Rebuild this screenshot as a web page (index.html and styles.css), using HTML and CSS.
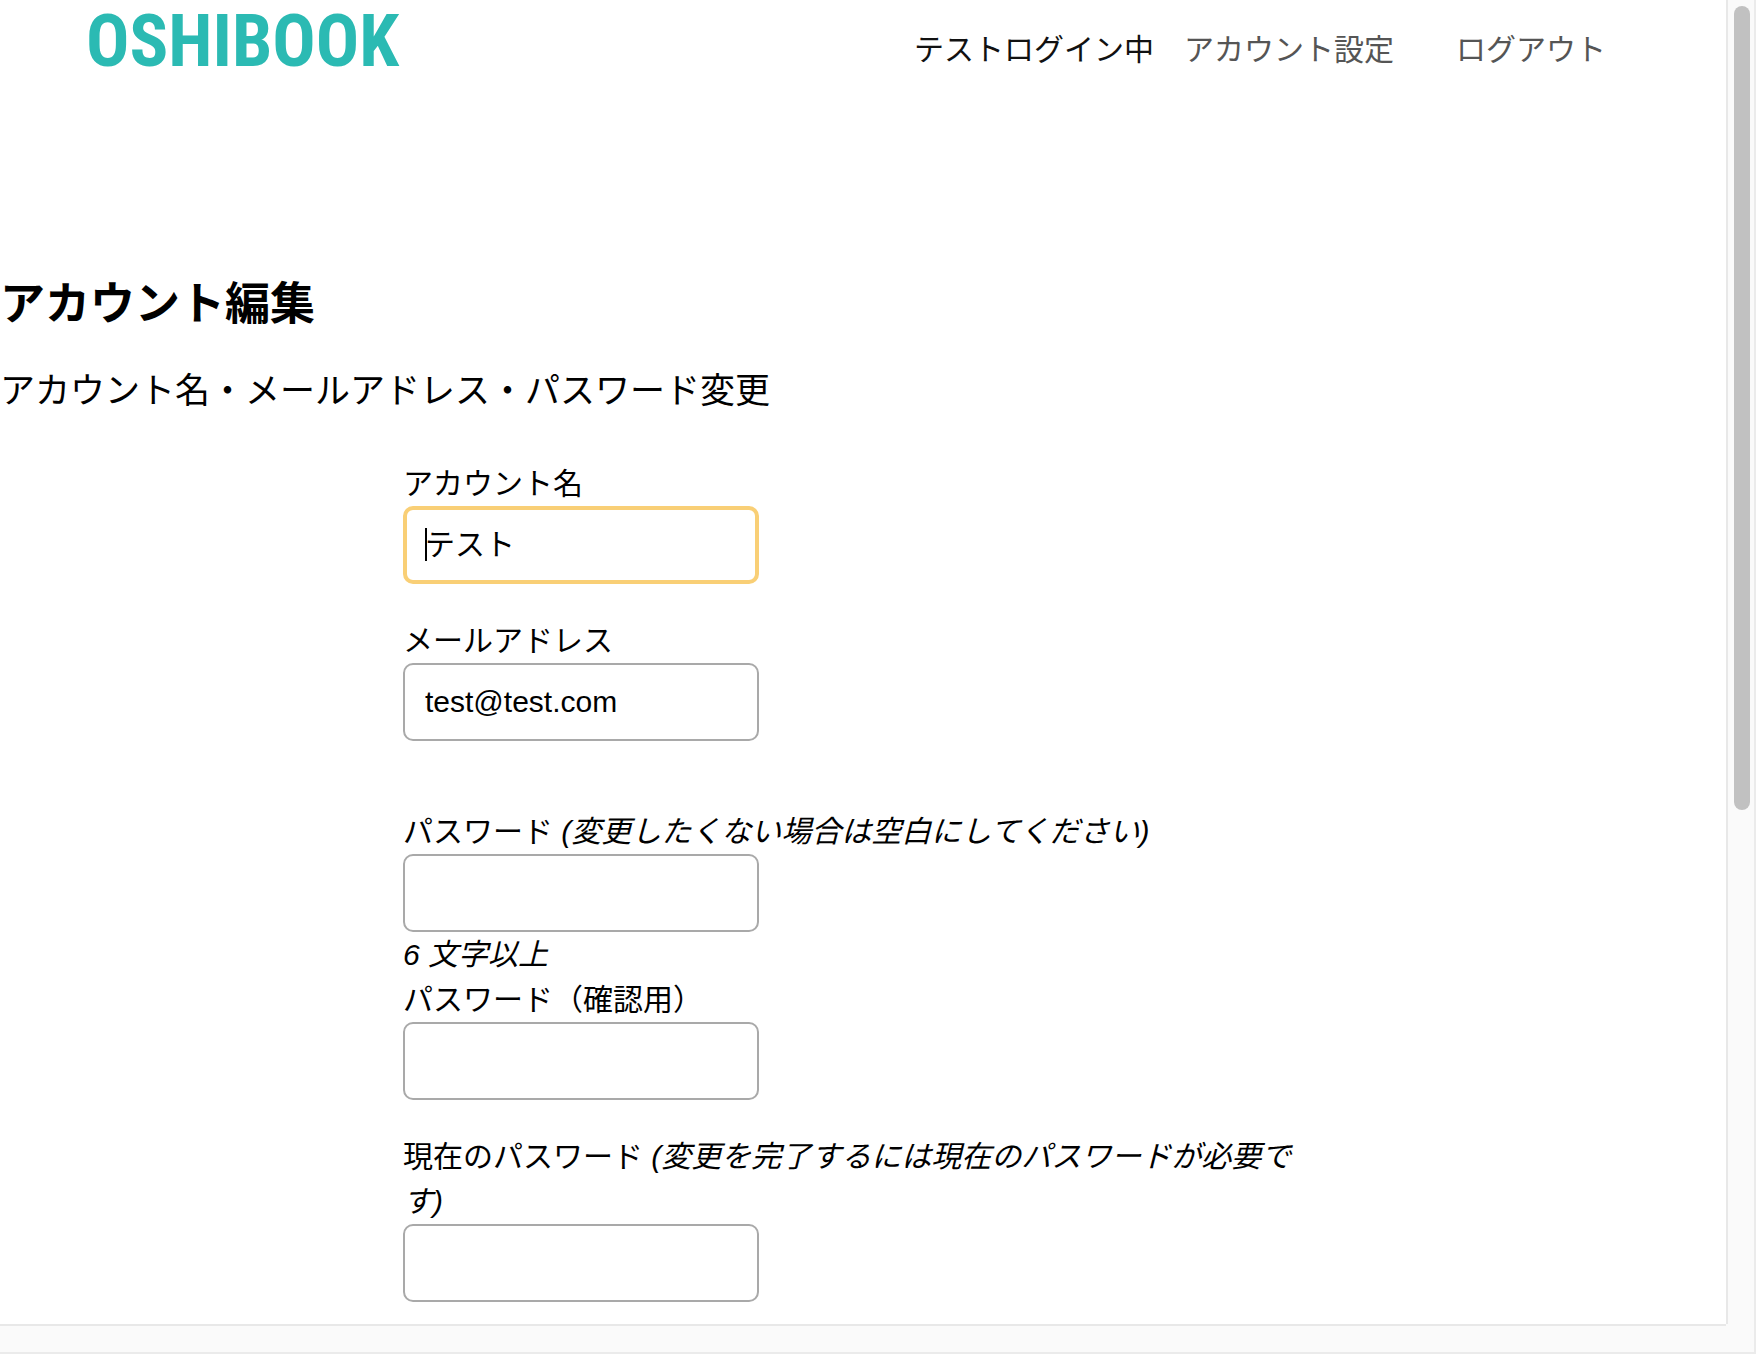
FILE: index.html
```html
<!DOCTYPE html>
<html lang="ja">
<head>
<meta charset="utf-8">
<title>OSHIBOOK</title>
<link rel="stylesheet" href="styles.css">
</head>
<body>
<div class="window">
  <div class="page">
    <header class="header">
      <a class="logo" href="#">OSHIBOOK</a>
      <nav class="nav">
        <span class="nav-user">テストログイン中</span>
        <a class="nav-link" href="#">アカウント設定</a>
        <a class="nav-link nav-logout" href="#">ログアウト</a>
      </nav>
    </header>
    <main>
      <h2 class="title">アカウント編集</h2>
      <h3 class="subtitle">アカウント名・メールアドレス・パスワード変更</h3>
      <form class="form">
        <div class="field">
          <label for="name">アカウント名</label>
          <div class="control">
            <input class="input input-active" id="name" type="text" value="テスト">
            <span class="caret"></span>
          </div>
        </div>
        <div class="field field-last">
          <label for="email">メールアドレス</label>
          <input class="input" id="email" type="email" value="test@test.com">
        </div>
        <div class="field">
          <label for="password">パスワード <em>(変更したくない場合は空白にしてください)</em></label>
          <input class="input" id="password" type="password">
          <em>6 文字以上</em>
          <label for="confirm">パスワード（確認用）</label>
          <input class="input" id="confirm" type="password">
        </div>
        <div class="field">
          <label for="current">現在のパスワード <em>(変更を完了するには現在のパスワードが必要です)</em></label>
          <input class="input" id="current" type="password">
        </div>
      </form>
    </main>
  </div>
  <div class="track track-y"><div class="thumb"></div></div>
  <div class="track track-x"></div>
</div>
</body>
</html>
```
FILE: styles.css
```css
* {
  box-sizing: border-box;
}

body {
  margin: 0;
  background: #fff;
  color: #000;
  font-family: "Liberation Sans", "Noto Sans CJK JP", sans-serif;
  font-size: 30px;
  line-height: 45px;
}

.window {
  display: grid;
  grid-template-columns: minmax(0, 1fr) 28px;
  grid-template-rows: minmax(0, 1fr) 28px;
  height: 100vh;
  background: #fafafa;
  border: solid #ebebeb;
  border-width: 0 2px 2px 0;
}

.page {
  overflow: hidden;
  background: #fff;
}

.track-y {
  padding: 6px 4px 0 6px;
  border-left: 2px solid #e8e8e8;
}

.track-x {
  grid-column: 1;
  border-top: 2px solid #e8e8e8;
}

.thumb {
  height: 61%;
  border-radius: 8px;
  background: #c1c1c1;
}

.header {
  display: flex;
  justify-content: space-between;
  padding: 0 120px 0 86px;
}

.logo {
  color: #2bbab3;
  font-family: "Roboto Condensed", Roboto, sans-serif;
  font-size: 72px;
  font-weight: bold;
  line-height: 84px;
  text-decoration: none;
}

.nav {
  display: flex;
  gap: 30px;
  padding-top: 27px;
}

.nav-user {
  color: #111;
}

.nav-link {
  color: #555;
  text-decoration: none;
}

.nav-logout {
  margin-left: 32px;
}

.title {
  margin: 187px 0 0;
  font-size: 45px;
  line-height: 68px;
}

.subtitle {
  margin: 25px 0 44px;
  font-size: 35px;
  font-weight: normal;
  line-height: 53px;
}

.form {
  max-width: 920px;
  margin: 0 auto;
}

.field {
  display: flex;
  flex-direction: column;
  align-items: flex-start;
  margin-bottom: 34px;
}

.field-last {
  margin-bottom: 68px;
}

.control {
  position: relative;
  display: flex;
}

.input {
  width: 356px;
  height: 78px;
  padding: 0 20px;
  border: 2px solid #a9a9a9;
  border-radius: 10px;
  background: #fff;
  color: #000;
  font: inherit;
  outline: none;
}

.input-active {
  padding: 0 18px 6px;
  border: 4px solid #f9cf76;
}

.caret {
  position: absolute;
  top: 22px;
  left: 22px;
  width: 2px;
  height: 33px;
  background: #000;
}
```
